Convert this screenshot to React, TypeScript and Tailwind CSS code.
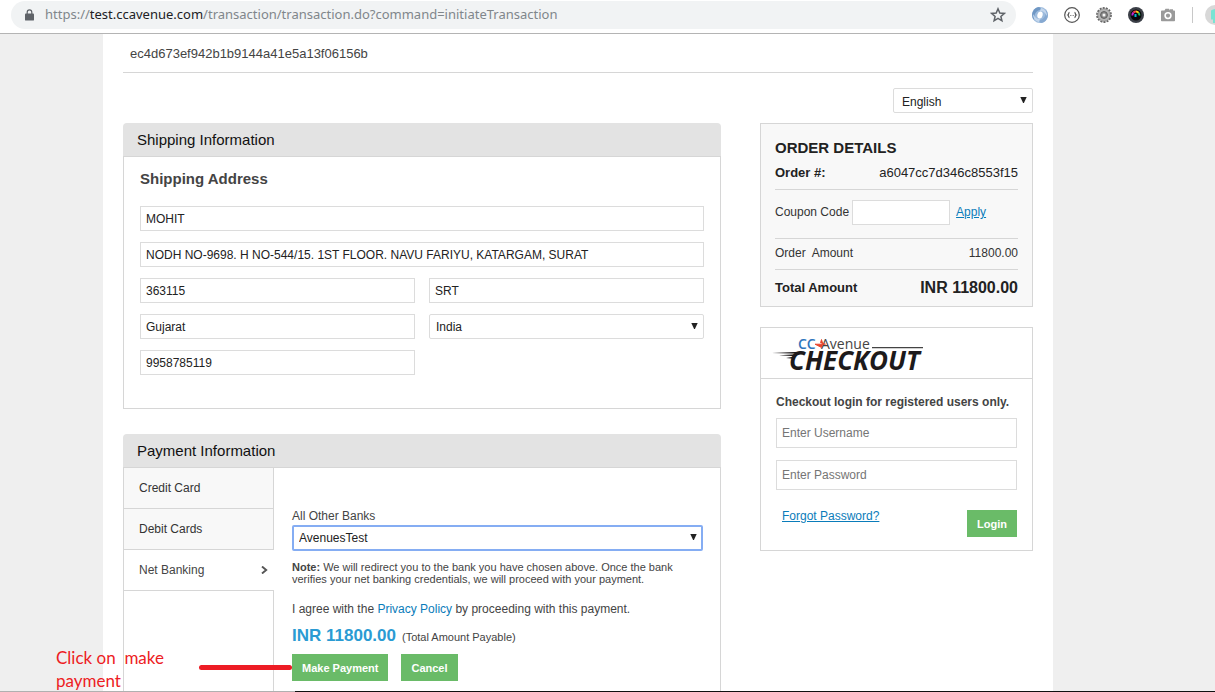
import type { ReactNode } from "react";

const fieldClass =
  "h-[25px] w-full min-w-0 border border-[#dcdcdc] bg-white px-[5px] text-[12px] text-[#222] outline-none";

function Field({ label, value }: { label: string; value: string }) {
  return <input type="text" aria-label={label} defaultValue={value} className={fieldClass} />;
}

const dropdownStyles = {
  plain:
    "block h-[25px] w-full appearance-none rounded-xs border border-[#dcdcdc] bg-white px-[6px] text-[12px] text-[#222] outline-none",
  roomy:
    "block h-[25px] w-full appearance-none rounded-xs border border-[#dcdcdc] bg-white px-[8px] pt-[3px] text-[12px] text-[#222] outline-none",
  focused:
    "block h-[26px] w-full appearance-none rounded-xs border-2 border-[#85adf3] bg-white px-[5px] text-[12px] text-[#222] outline-none",
};

function Dropdown({
  id,
  label,
  value,
  look = "plain",
}: {
  id: string;
  label?: string;
  value: string;
  look?: keyof typeof dropdownStyles;
}) {
  return (
    <div className="relative w-full">
      <select id={id} aria-label={label} defaultValue={value} className={dropdownStyles[look]}>
        <option>{value}</option>
      </select>
      <svg className="pointer-events-none absolute top-[9px] right-[6px]" width="7" height="6" viewBox="0 0 7 6" aria-hidden="true">
        <path d="M0.300 0h6.400L3.900 6H3.100z" fill="#222" />
      </svg>
    </div>
  );
}

function PanelTitle({ children }: { children: ReactNode }) {
  return (
    <h2 className="h-[33px] rounded-t bg-[#e3e3e3] px-[14px] text-[15px] leading-[34px] text-[#111]">{children}</h2>
  );
}

function GreenButton({ children }: { children: ReactNode }) {
  return (
    <button type="button" className="h-[27px] bg-[#6abb68] px-[10px] pt-px text-[11px] font-bold text-white">
      {children}
    </button>
  );
}

function Logo() {
  return (
    <svg width="154" height="38" viewBox="0 0 154 38" className="overflow-visible" role="img" aria-label="CCAvenue Checkout">
      <g>
        <text x="26" y="14" fontSize="14" fontWeight="600" fill="#2f76bd" fontFamily="'Open Sans', sans-serif">
          CC
        </text>
        <text x="49" y="14" fontSize="14" fill="#444" fontFamily="'Open Sans', sans-serif">
          Avenue
        </text>
        <text x="17" y="35" fontSize="26" fontWeight="700" fontStyle="italic" fill="#1d1a1b" fontFamily="'Open Sans', sans-serif">
          CHECKOUT
        </text>
      </g>
      <path d="M43 9.200h10.500l-5-1.500 1-3.200 1.200 3.800-1.200 4.200z" fill="#e8452c" stroke="#e8452c" strokeWidth="0.900" />
      <path d="M100 12.600h51" stroke="#444" strokeWidth="1.200" />
      <path d="M0 18 28 16.800v2zM7 20.300 24 19.200v2zM14 23 21 21.800v1.900z" fill="#1d1a1b" />
    </svg>
  );
}

function BrowserBar() {
  return (
    <header className="flex h-[34px] items-start overflow-hidden border-b border-[#b4b4b4] bg-white pt-px pl-[11px]">
      <div className="flex h-[28px] min-w-0 flex-1 items-center rounded-full bg-[#f1f3f4] pr-[10px] pl-[14px]">
        <svg width="9" height="12" viewBox="0 0 9 12" aria-hidden="true">
          <path d="M2.200 5V3.200a2.300 2.300 0 0 1 4.600 0V5" fill="none" stroke="#5f6368" strokeWidth="1.200" />
          <rect x="0" y="4.400" width="9" height="7.200" rx="0.900" fill="#5f6368" />
        </svg>
        <p className="ml-[11px] flex-1 truncate font-['Noto_Sans',sans-serif] text-[13px] text-[#80868b]">
          https://<span className="text-[#202124]">test.ccavenue.com</span>
          /transaction/transaction.do?command=initiateTransaction
        </p>
        <button type="button" aria-label="Bookmark this page">
          <svg width="16" height="16" viewBox="0 0 16 16" fill="none" stroke="#5f6368" strokeWidth="1.500">
            <path d="M8 1.800 9.800 6l4.500.4-3.400 3 1 4.400L8 11.400l-3.900 2.400 1-4.400-3.400-3L6.200 6z" />
          </svg>
        </button>
      </div>
      <div className="flex h-[28px] items-center gap-[16px] pl-[16px]">
        <svg width="16" height="16" viewBox="0 0 16 16" aria-hidden="true">
          <circle cx="8" cy="8" r="8" fill="#9dbbdd" />
          <path d="M7 0a8 8 0 0 0-5 13c0-5 1-9 7-10.500C9 1.500 8 .5 7 0z" fill="#6f97c4" />
          <path d="M9 16a8 8 0 0 0 5-13c0 5-1 9-7 10.500.5 1 1 2 2 2.500z" fill="#86a9d1" />
          <path d="M9 1c4 1 6 4 6 8-2-4-4-5-7-5zM7 15c-4-1-6-4-6-8 2 4 4 5 7 5z" fill="#c3d6ec" />
          <ellipse cx="8" cy="8" rx="2.600" ry="3.600" fill="#fff" transform="rotate(15 8 8)" />
        </svg>
        <svg width="16" height="16" viewBox="0 0 16 16" fill="none" stroke="#555" aria-hidden="true">
          <circle cx="8" cy="8" r="7.300" strokeWidth="1.200" />
          <path d="M5.500 5.300C4.400 5.300 4.900 7.500 3.900 8c1 .5.500 2.700 1.600 2.700M10.500 5.300C11.600 5.300 11.100 7.500 12.100 8c-1 .5-.5 2.700-1.600 2.700" strokeWidth="1.300" />
          <path d="M6.200 8.500h4" strokeWidth=".8" strokeDasharray=".8 .6" />
        </svg>
        <svg width="16" height="16" viewBox="0 0 16 16" aria-hidden="true">
          <circle cx="8" cy="8" r="6.900" fill="none" stroke="#666" strokeWidth="2" strokeDasharray="2 1.100" />
          <circle cx="8" cy="8" r="6.300" fill="#b5b5b5" stroke="#777" strokeWidth=".6" />
          <circle cx="8" cy="8" r="3.400" fill="#8c8c8c" stroke="#5e5e5e" strokeWidth="1" />
          <circle cx="8" cy="8" r="1.500" fill="#f4f4f4" />
        </svg>
        <svg width="16" height="16" viewBox="0 0 16 16" aria-hidden="true">
          <circle cx="8" cy="8" r="8" fill="#3b3f47" />
          <circle cx="8" cy="8" r="5.500" fill="#07070a" />
          <g fill="none" strokeWidth="2">
            <path d="M4.400 8.500A3.500 3.500 0 0 1 5.500 5.500" stroke="#c026d3" />
            <path d="M5.500 5.500A3.500 3.500 0 0 1 8 4.600" stroke="#ef4444" />
            <path d="M8 4.600a3.500 3.500 0 0 1 2.600 1.200" stroke="#facc15" />
            <path d="M10.600 5.800A3.500 3.500 0 0 1 11.300 8.500" stroke="#22c55e" />
            <path d="M7.500 7v3" stroke="#06b6d4" />
          </g>
        </svg>
        <svg width="16" height="16" viewBox="0 0 16 16" aria-hidden="true">
          <path d="M1.800 3.600h2.700l1-1.800h3.500l1 1.800V2.200h3v1.400h1.200q.8 0 .8.800v9q0 .8-.8.800H1.800q-.8 0-.8-.8v-9q0-.8.800-.8z" fill="#9a9a9a" />
          <circle cx="8" cy="8.600" r="2.900" fill="#9a9a9a" stroke="#fff" strokeWidth="1.600" />
        </svg>
        <span className="h-[16px] w-px bg-[#c8c8c8]" />
        <span className="-ml-[4px] block h-[20px] w-[10px] overflow-hidden">
          <svg width="20" height="20" viewBox="0 0 20 20" aria-hidden="true">
            <circle cx="10" cy="10" r="10" fill="#d8d8d8" />
            <path d="M6 5.500q4-3 8 0v9h-2v3.500H8v-3.500H6z" fill="#79e3d3" />
          </svg>
        </span>
      </div>
    </header>
  );
}

function ShippingPanel() {
  return (
    <section>
      <PanelTitle>Shipping Information</PanelTitle>
      <div className="border border-[#d6d6d6] px-[16px] pt-[12px] pb-[33px]">
        <h3 className="text-[15px] leading-[20px] font-bold text-[#444]">Shipping Address</h3>
        <form className="mt-[17px] grid grid-cols-2 gap-x-[14px] gap-y-[11px]">
          <div className="col-span-2 flex">
            <Field label="Name" value="MOHIT" />
          </div>
          <div className="col-span-2 flex">
            <Field label="Address" value="NODH NO-9698. H NO-544/15. 1ST FLOOR. NAVU FARIYU, KATARGAM, SURAT" />
          </div>
          <Field label="Zip code" value="363115" />
          <Field label="City" value="SRT" />
          <Field label="State" value="Gujarat" />
          <Dropdown id="country" label="Country" value="India" />
          <Field label="Phone" value="9958785119" />
        </form>
      </div>
    </section>
  );
}

function PaymentPanel() {
  return (
    <section className="flex flex-1 flex-col">
      <PanelTitle>Payment Information</PanelTitle>
      <div className="flex flex-1 border-x border-t border-[#d6d6d6] text-[12px]">
        <nav className="flex w-[150px] flex-col text-[#333]">
          <button type="button" className="h-[41px] border-r border-b border-[#d6d6d6] bg-[#f8f8f8] px-[15px] text-left">
            Credit Card
          </button>
          <button type="button" className="h-[41px] border-r border-b border-[#d6d6d6] bg-[#f8f8f8] px-[15px] text-left">
            Debit Cards
          </button>
          <button
            type="button"
            className="flex h-[41px] items-center justify-between border-b border-[#d6d6d6] pr-[6px] pl-[15px] text-left text-[#444]"
          >
            Net Banking
            <svg width="7" height="8" viewBox="0 0 7 8" fill="none" stroke="#555" strokeWidth="1.900" aria-hidden="true">
              <path d="M1 .5 5.200 4 1 7.500" />
            </svg>
          </button>
          <div className="flex-1 border-r border-[#d6d6d6]" />
        </nav>
        <form className="flex-1 pt-[40px] pr-[17px] pb-[10px] pl-[18px] text-[#444]">
          <label htmlFor="bank" className="block leading-[17px]">
            All Other Banks
          </label>
          <Dropdown id="bank" value="AvenuesTest" look="focused" />
          <p className="mt-[10px] text-[11px] leading-[12px]">
            <b>Note:</b> We will redirect you to the bank you have chosen above. Once the bank verifies your net banking
            credentials, we will proceed with your payment.
          </p>
          <p className="mt-[16px] leading-[16px]">
            I agree with the{" "}
            <a href="#privacy" className="text-[#0a7cba]">
              Privacy Policy
            </a>{" "}
            by proceeding with this payment.
          </p>
          <p className="mt-[8px] leading-[22px]">
            <b className="mr-[6px] text-[17px] text-[#2a9bd3]">INR 11800.00</b>
            <span className="text-[11px]">(Total Amount Payable)</span>
          </p>
          <div className="mt-[6px] flex gap-[13px]">
            <GreenButton>Make Payment</GreenButton>
            <GreenButton>Cancel</GreenButton>
          </div>
        </form>
      </div>
    </section>
  );
}

function OrderDetails() {
  return (
    <section className="border border-[#d6d6d6] bg-[#f8f8f8] px-[14px] pt-[14px] pb-[7px] text-[12px] text-[#333]">
      <h2 className="text-[15px] leading-[20px] font-bold text-[#222]">ORDER DETAILS</h2>
      <div className="flex h-[32px] justify-between border-b border-[#d6d6d6] pt-[5px] text-[13px] leading-[20px] text-[#222]">
        <b>Order #:</b>
        <span>a6047cc7d346c8553f15</span>
      </div>
      <div className="flex h-[49px] items-start border-b border-[#d6d6d6] pt-[10px] leading-[25px]">
        <label htmlFor="coupon">Coupon Code</label>
        <input
          id="coupon"
          type="text"
          className="mr-[6px] ml-[3px] h-[25px] w-[98px] border border-[#dcdcdc] bg-white px-[5px] outline-none"
        />
        <a href="#apply" className="text-[#0a7cba] underline">
          Apply
        </a>
      </div>
      <div className="flex h-[31px] justify-between border-b border-[#d6d6d6] leading-[29px]">
        <span className="whitespace-pre">Order  Amount</span>
        <span>11800.00</span>
      </div>
      <div className="flex h-[29px] items-center justify-between pt-[7px] font-bold text-[#222]">
        <span className="text-[13px]">Total Amount</span>
        <span className="text-[16px]">INR 11800.00</span>
      </div>
    </section>
  );
}

function CheckoutLogin() {
  const input =
    "block h-[30px] w-full border border-[#dcdcdc] bg-white px-[5px] text-[12px] placeholder:text-[#757575] outline-none";
  return (
    <section className="border border-[#d6d6d6] text-[12px]">
      <div className="h-[51px] border-b border-[#d6d6d6] pt-[7px] pl-[11px]">
        <Logo />
      </div>
      <form className="px-[15px] pt-[15px] pb-[13px]">
        <h3 className="leading-[17px] font-bold whitespace-nowrap text-[#444]">Checkout login for registered users only.</h3>
        <input type="text" aria-label="Username" placeholder="Enter Username" className={input + " mt-[7px]"} />
        <input type="password" aria-label="Password" placeholder="Enter Password" className={input + " mt-[12px]"} />
        <div className="mt-[20px] flex justify-between pl-[6px]">
          <a href="#forgot" className="leading-[12px] text-[#0a7cba] underline">
            Forgot Password?
          </a>
          <GreenButton>Login</GreenButton>
        </div>
      </form>
    </section>
  );
}

export default function App() {
  return (
    <div className="flex min-h-screen flex-col bg-[#efefef] font-['Liberation_Sans',Arial,sans-serif]">
      <BrowserBar />
      <div className="relative flex flex-1 pr-[162px] pl-[103px]">
        <main className="flex flex-1 flex-col bg-white px-[20px]">
          <p className="h-[39px] border-b border-[#d6d6d6] pl-[7px] text-[13px] leading-[39px] text-[#444]">
            ec4d673ef942b1b9144a41e5a13f06156b
          </p>
          <div className="mt-[15px] mb-[10px] w-[140px] self-end">
            <Dropdown id="language" label="Language" value="English" look="roomy" />
          </div>
          <div className="flex flex-1 gap-[39px]">
            <div className="flex min-w-0 flex-1 flex-col gap-[25px]">
              <ShippingPanel />
              <PaymentPanel />
            </div>
            <aside className="flex w-[273px] flex-col gap-[20px]">
              <OrderDetails />
              <CheckoutLogin />
            </aside>
          </div>
        </main>
        <p className="absolute bottom-[-1px] left-[56px] font-['Lato',sans-serif] text-[17px] leading-[23px] whitespace-pre text-[#ed1c24]">
          {"Click on  make\npayment"}
        </p>
        <span className="absolute bottom-[21px] left-[199px] h-[5px] w-[93px] rounded-full bg-[#ed1c24]" />
      </div>
      <footer className="flex h-px">
        <span className="w-[295px] bg-[#b0b0b0]" />
        <span className="flex-1 bg-[#111]" />
      </footer>
    </div>
  );
}
